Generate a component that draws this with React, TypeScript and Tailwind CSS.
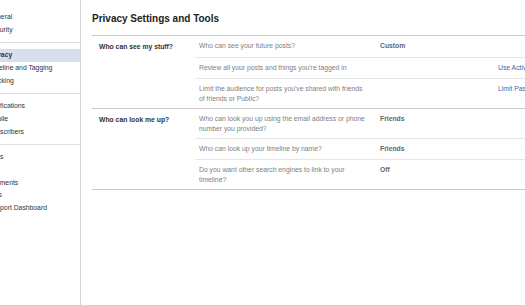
import React from 'react';

type Row = { q: string; value?: string; link?: string };
type Section = { label: string; rows: Row[] };

const sections: Section[] = [
  {
    label: 'Who can see my stuff?',
    rows: [
      { q: 'Who can see your future posts?', value: 'Custom' },
      { q: "Review all your posts and things you're tagged in", link: 'Use Activity Log' },
      {
        q: "Limit the audience for posts you've shared with friends of friends or Public?",
        link: 'Limit Past Posts',
      },
    ],
  },
  {
    label: 'Who can look me up?',
    rows: [
      { q: 'Who can look you up using the email address or phone number you provided?', value: 'Friends' },
      { q: 'Who can look up your timeline by name?', value: 'Friends' },
      { q: 'Do you want other search engines to link to your timeline?', value: 'Off' },
    ],
  },
];

const navGroups = [
  ['General', 'Security'],
  ['Privacy', 'Timeline and Tagging', 'Blocking'],
  ['Notifications', 'Mobile', 'Subscribers'],
  ['Apps', 'Ads', 'Payments', 'Gifts', 'Support Dashboard'],
];

const Sidebar: React.FC = () => (
  <aside className="w-[81px] shrink-0 border-r border-[#d3d3d3] pt-[10.5px] overflow-hidden bg-white">
    {navGroups.map((group, gi) => (
      <div key={gi}>
        {gi > 0 && (
          <div className="h-[12.75px] flex items-center">
            <div className="w-full border-t border-[#dedede]" />
          </div>
        )}
        {group.map((item) => (
          <div
            key={item}
            className={`h-[12.75px] flex items-center whitespace-nowrap text-[6.8px] text-[#333] ${
              item === 'Privacy' ? 'bg-[#d8dfea] font-bold' : ''
            }`}
          >
            <span className="-ml-[12px]">{item}</span>
          </div>
        ))}
      </div>
    ))}
  </aside>
);

const SettingsTable: React.FC = () => (
  <div className="border-t border-[#c9c9c9] w-[520px]">
    {sections.map((s) => (
      <div key={s.label} className="flex border-b border-[#c9c9c9]">
        <div className="w-[103px] shrink-0 pl-[7px] pt-[5.5px] text-[6.8px] leading-[10px] font-bold text-[#333]">
          {s.label}
        </div>
        <div className="flex-1">
          {s.rows.map((r, i) => (
            <div
              key={r.q}
              className={`flex min-h-[21px] py-[4.5px] text-[6.8px] leading-[10px] ${
                i > 0 ? 'border-t border-[#e6e6e6]' : ''
              }`}
            >
              <div className="w-[185px] shrink-0 pl-[4px] pr-[14px] text-[#808080]">{r.q}</div>
              <div className="w-[118px] shrink-0 font-bold text-[#666]">{r.value}</div>
              <div className="whitespace-nowrap text-[#4a64a0]">{r.link}</div>
            </div>
          ))}
        </div>
      </div>
    ))}
  </div>
);

export default function App() {
  return (
    <div className="w-[525px] h-[305px] overflow-hidden flex bg-white font-['Liberation_Sans',Arial,sans-serif]">
      <Sidebar />
      <main className="flex-1 min-w-0 overflow-hidden pl-[11px] pt-[13px]">
        <h1 className="text-[10px] leading-[12px] font-bold text-[#222] mb-[10px] whitespace-nowrap">
          Privacy Settings and Tools
        </h1>
        <SettingsTable />
      </main>
    </div>
  );
}
